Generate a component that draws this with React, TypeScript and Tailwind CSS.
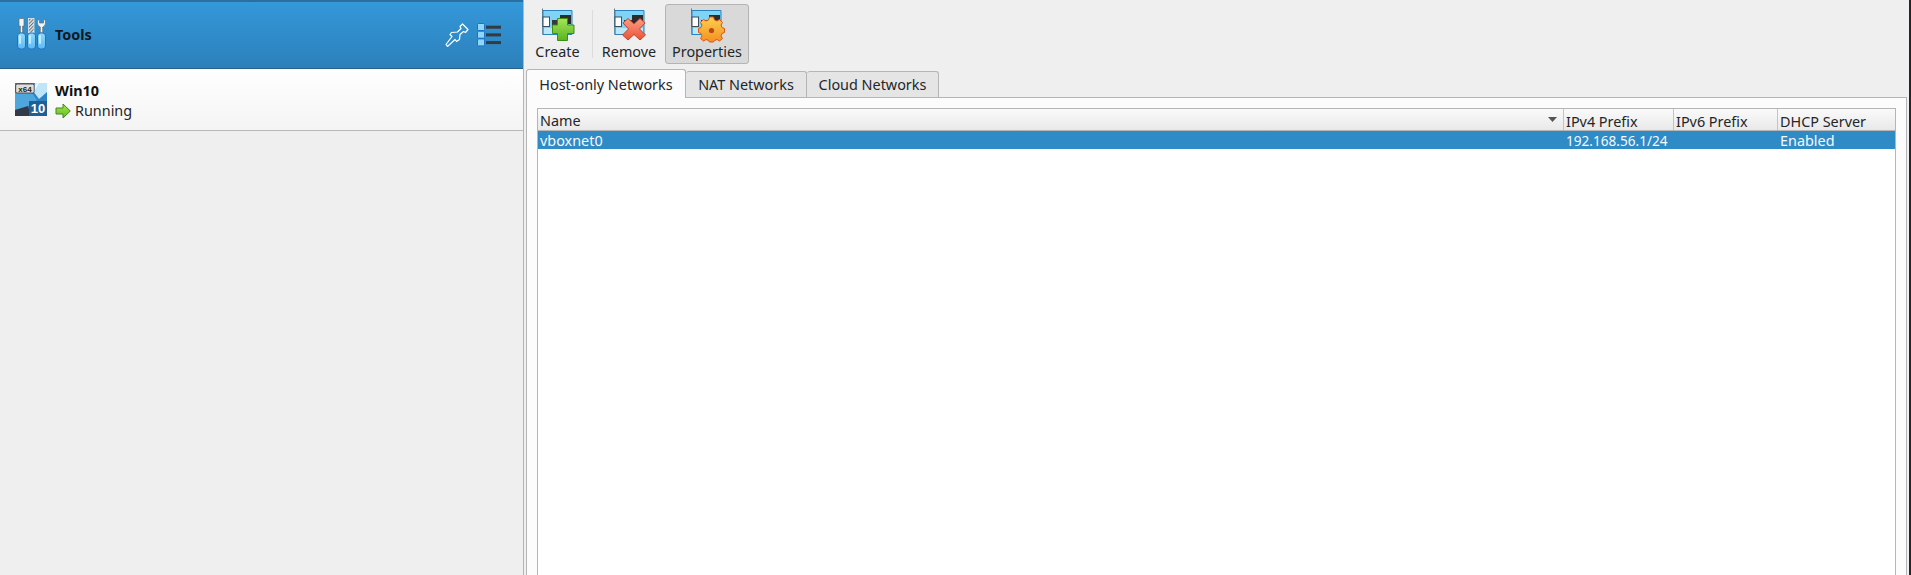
const NicBase = () => (
  <>
    <path d="M1.5 -0.5 L2 26" stroke="#66747f" strokeWidth="1" fill="none" />
    <path d="M2 1.5H31V25.5H2Z" fill="#7ed3f7" stroke="#2c83bb" />
    <path d="M3 19H30V25H3Z" fill="#b9e8fb" />
    <rect x="2" y="8" width="6.5" height="9.5" fill="#fff" stroke="#3f4d58" />
    <rect x="19" y="6" width="11" height="9" fill="#2c2c2c" />
    <rect x="11" y="11" width="8" height="5" fill="#3a3a3a" />
  </>
);

const CreateIcon = () => (
  <svg width="34" height="34" viewBox="0 -1 34 34" className="overflow-visible">
    <defs>
      <linearGradient id="plusFill" x1="0" y1="0" x2="0" y2="1">
        <stop offset="0" stopColor="#a6e45a" />
        <stop offset="1" stopColor="#58b41d" />
      </linearGradient>
    </defs>
    <NicBase />
    <path d="M16.5 9.5H26.5V16H33V24.5H26.5V31.5H16.5V24.5H11.5V16H16.5Z" fill="url(#plusFill)" stroke="#3d8f12" strokeWidth="1" strokeLinejoin="round" />
  </svg>
);

const RemoveIcon = () => (
  <svg width="34" height="34" viewBox="-1 -1 34 34" className="overflow-visible">
    <defs>
      <linearGradient id="xFill" x1="0" y1="0" x2="0" y2="1">
        <stop offset="0" stopColor="#fb9d84" />
        <stop offset="1" stopColor="#ea5236" />
      </linearGradient>
    </defs>
    <NicBase />
    <path d="M15 9.5L21 15L27 9.5L32 14L26.5 20L32.5 26L27 31L21 25.5L15 31L9.5 26L15.5 20L10 14Z" fill="url(#xFill)" stroke="#c8412a" strokeWidth="1" strokeLinejoin="round" />
  </svg>
);

const PropertiesIcon = () => (
  <svg width="34" height="34" viewBox="0 -1 34 34" className="overflow-visible">
    <defs>
      <linearGradient id="gearFill" x1="0" y1="0" x2="0" y2="1">
        <stop offset="0" stopColor="#fcd04f" />
        <stop offset="1" stopColor="#f58f20" />
      </linearGradient>
    </defs>
    <NicBase />
    <path
      d="M19 9H23L24 12L26.5 13L29 11.5L32 14.5L30.5 17L31.5 19.5L34 20.5V24.5L31.5 25.5L30.5 28L32 30.5L29 33L26.5 31.5L24 32.5L23 34H19L18 32.5L15.5 31.5L13 33L10 30.5L11.5 28L10.5 25.5L8 24.5V20.5L10.5 19.5L11.5 17L10 14.5L13 11.5L15.5 13L18 12Z"
      fill="url(#gearFill)"
      stroke="#d9561c"
      strokeWidth="1"
      strokeLinejoin="round"
      transform="translate(0.5 -1)"
    />
    <circle cx="21.5" cy="21.5" r="2.6" fill="#b84a16" />
  </svg>
);

const Handle = ({ x }: { x: number }) => (
  <>
    <rect x={x} y="15" width="8" height="16" rx="3" fill="url(#handleFill)" stroke="#1c72c6" strokeWidth="1" />
    <rect x={x + 1.5} y="17" width="2" height="9" rx="1" fill="#c4ecfe" />
  </>
);

const ToolsIcon = () => (
  <svg width="30" height="32" viewBox="0 0 30 32" className="shrink-0 mb-[1px]">
    <defs>
      <linearGradient id="handleFill" x1="0" y1="0" x2="0" y2="1">
        <stop offset="0" stopColor="#8fd8fc" />
        <stop offset="1" stopColor="#5db9f4" />
      </linearGradient>
      <pattern id="hatch" width="2.4" height="2.4" patternUnits="userSpaceOnUse" patternTransform="rotate(45)">
        <rect width="2.4" height="2.4" fill="#f0f0f0" />
        <rect width="1.1" height="2.4" fill="#6b6b6b" />
      </pattern>
    </defs>
    <path d="M2 1.5Q2 0.5 3 0.5H6Q7 0.5 7 1.5V8H5.6V15H3.4V8H2Z" fill="#f5f5f5" stroke="#6a6a6a" strokeWidth="0.7" />
    <Handle x={0.5} />
    <rect x="11.5" y="0.5" width="5.5" height="14.5" fill="url(#hatch)" stroke="#e8e8e8" strokeWidth="0.8" />
    <Handle x={10.5} />
    <path d="M20.5 1V5Q20.5 8 23.3 9V15H25.7V9Q28.5 8 28.5 5V1L26.5 2.8V5H22.5V2.8Z" fill="#f5f5f5" stroke="#6a6a6a" strokeWidth="0.7" strokeLinejoin="round" />
    <Handle x={20.5} />
  </svg>
);

const PinIcon = () => (
  <svg width="24" height="24" viewBox="0 0 24 24" className="shrink-0">
    <path d="M1 21.5L2.5 23.5L10 16.5L11.5 18.5L14.5 16.5L15 11.5L18.5 8.5L20.5 9.5L23 6.5L17.5 1L15 3.5L16 5.5L12.5 9L6.5 9.5L5 11.5L7 13.5L1 21.5Z" fill="none" stroke="#fff" strokeWidth="1.2" strokeLinejoin="round" />
  </svg>
);

const ListIcon = () => (
  <svg width="25" height="24" viewBox="0 0 25 24" className="shrink-0">
    {[0.5, 8.2, 15.9].map((y) => (
      <g key={y}>
        <rect x="0.5" y={y} width="7" height="7" rx="1" fill="#8fd6fb" stroke="#1c70c8" />
        <rect x="9" y={y + 2.2} width="15" height="3" fill="#333a40" />
      </g>
    ))}
  </svg>
);

const Win10Icon = () => (
  <svg width="32" height="33" viewBox="0 0 32 33" className="shrink-0">
    <rect width="32" height="33" fill="#2e83c4" />
    <path d="M20 0H32V9L24 16L18 8Z" fill="#bfe5f9" />
    <path d="M0 10H17L22 17L12 24L0 27Z" fill="#4fa6dd" />
    <path d="M0 27L13 23L16 33H0Z" fill="#333947" />
    <path d="M14 10L22 0H24L18 10Z" fill="#ffffff" opacity="0.7" />
    <rect x="0.7" y="1" width="18.5" height="9" rx="1.5" fill="#dedede" stroke="#333" strokeWidth="0.8" />
    <text x="10" y="8.7" textAnchor="middle" fontSize="8" fontWeight="700" fontFamily="'Liberation Sans', sans-serif" fill="#222">x64</text>
    <rect x="14" y="18" width="18" height="15" fill="#1f5f95" />
    <text x="23" y="30" textAnchor="middle" fontSize="13" fontWeight="700" fontFamily="'Liberation Sans', sans-serif" fill="#fff">10</text>
  </svg>
);

const RunningIcon = () => (
  <svg width="16" height="16" viewBox="0 0 16 16" className="shrink-0">
    <defs>
      <linearGradient id="runFill" x1="0" y1="0" x2="0" y2="1">
        <stop offset="0" stopColor="#a5e24e" />
        <stop offset="1" stopColor="#63bd22" />
      </linearGradient>
    </defs>
    <path d="M8 1L15.3 8L8 15V11H1V5H8Z" fill="url(#runFill)" stroke="#3f8a18" strokeWidth="1" strokeLinejoin="round" />
  </svg>
);

function ToolButton({ label, active, icon, width }: { label: string; active?: boolean; icon: React.ReactNode; width: string }) {
  return (
    <div className={`flex flex-col items-center h-[60px] rounded-[3px] ${width} ${active ? "bg-[#d9d9d9] border border-[#b4b4b4] pt-[3px]" : "pt-[4px]"}`}>
      {icon}
      <span className="leading-[20px]">{label}</span>
    </div>
  );
}

export default function App() {
  return (
    <div className="flex h-[575px] w-[1911px] overflow-hidden bg-[#efefef] text-[14.4px] text-[#232629] font-['Noto_Sans',sans-serif]">
      <aside className="w-[524px] shrink-0 border-r border-[#b5b5b5] flex flex-col">
        <header className="h-[69px] shrink-0 flex items-center pl-[17px] pr-[21px] pb-[1px] border-t-2 border-b border-t-[#2a6f9e] border-b-[#24618c] bg-gradient-to-b from-[#3498da] to-[#2c80ba]">
          <ToolsIcon />
          <span className="ml-[8px] font-bold text-[#10181f]">Tools</span>
          <div className="ml-auto flex items-center gap-[8px]">
            <PinIcon />
            <ListIcon />
          </div>
        </header>
        <div className="h-[62px] shrink-0 flex items-center pl-[15px] border-b border-[#b9b9b9] bg-gradient-to-b from-white to-[#f4f4f4]">
          <Win10Icon />
          <div className="ml-[8px] pt-[2px] flex flex-col">
            <span className="font-bold leading-[20px] text-[#111]">Win10</span>
            <span className="flex items-center gap-[4px] leading-[20px]">
              <RunningIcon />
              Running
            </span>
          </div>
        </div>
      </aside>

      <main className="flex-1 flex flex-col ml-[2px] min-w-0">
        <div className="h-[69px] shrink-0 flex items-start pt-[4px]">
          <ToolButton label="Create" width="w-[63px]" icon={<CreateIcon />} />
          <div className="w-px h-[48px] ml-[3px] mt-[6px] bg-[#dcdcdc]" />
          <ToolButton label="Remove" width="w-[72px]" icon={<RemoveIcon />} />
          <ToolButton label="Properties" width="w-[84px]" active icon={<PropertiesIcon />} />
        </div>

        <div className="flex items-end h-[28px] shrink-0">
          <div className="h-[29px] w-[160px] pt-[2px] flex items-center justify-center bg-[#fcfcfc] border border-b-0 border-[#b5b5b5] rounded-t-[3px] relative z-10 -mb-px">
            Host-only Networks
          </div>
          <div className="h-[26px] w-[121px] flex items-center justify-center bg-[#e5e5e5] border border-l-0 border-b-0 border-[#b5b5b5] rounded-t-[3px]">
            NAT Networks
          </div>
          <div className="h-[26px] w-[132px] flex items-center justify-center bg-[#e5e5e5] border border-l-0 border-b-0 border-[#b5b5b5] rounded-t-[3px]">
            Cloud Networks
          </div>
        </div>

        <div className="flex-1 min-h-0 mr-[2px] border border-b-0 border-[#b5b5b5] bg-[#fcfcfc] pt-[10px] px-[10px]">
          <div className="h-full border border-b-0 border-[#b5b5b5] bg-white flex flex-col">
            <div className="h-[22px] shrink-0 flex border-b border-[#b5b5b5] bg-gradient-to-b from-[#fafafa] to-[#e9e9e9] leading-[25px]">
              <div className="flex-1 flex items-center justify-between pl-[2px] pr-[6px] border-r border-[#c4c4c4]">
                <span className="pt-[2px] leading-[20px]">Name</span>
                <svg width="9" height="5" viewBox="0 0 9 5"><path d="M0 0h9L4.5 5z" fill="#555" /></svg>
              </div>
              <div className="w-[110px] pl-[2px] border-r border-[#c4c4c4]">IPv4 Prefix</div>
              <div className="w-[104px] pl-[2px] border-r border-[#c4c4c4]">IPv6 Prefix</div>
              <div className="w-[117px] pl-[2px]">DHCP Server</div>
            </div>
            <div className="h-[18px] shrink-0 flex bg-[#2f8bc6] text-[#f4f9fc] leading-[20px]">
              <div className="flex-1 pl-[2px]">vboxnet0</div>
              <div className="w-[110px] pl-[2px] text-[13.6px]">192.168.56.1/24</div>
              <div className="w-[104px] pl-[2px]"></div>
              <div className="w-[117px] pl-[2px]">Enabled</div>
            </div>
          </div>
        </div>
      </main>
      <div className="w-[2px] shrink-0 bg-[#22262b]" />
    </div>
  );
}
